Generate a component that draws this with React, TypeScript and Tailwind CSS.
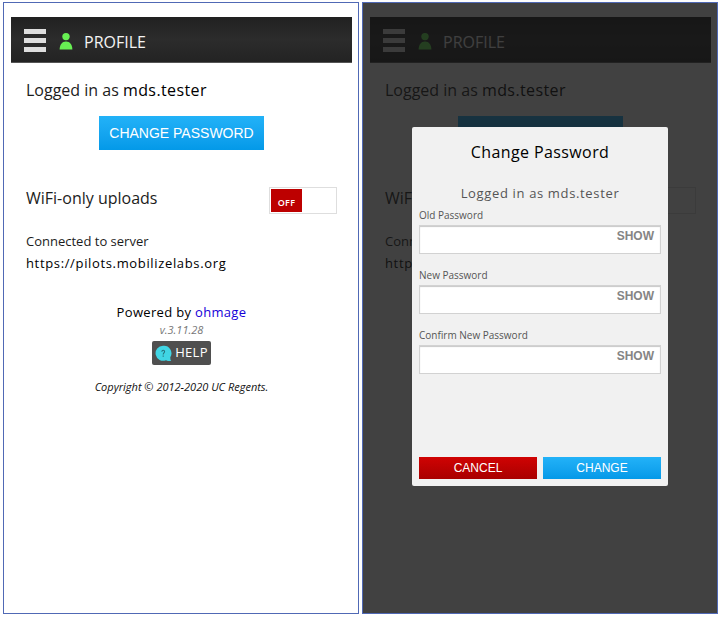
import { useId, useState } from "react";

const blueButton =
  "cursor-pointer bg-linear-to-b from-[#22b2f8] to-[#0399e8] font-['Liberation_Sans',sans-serif] text-white";

function PersonIcon() {
  return (
    <svg width="14" height="18" viewBox="0 0 14 18" aria-hidden="true">
      <circle cx="7" cy="4.6" r="3.7" fill="#68f053" />
      <path d="M0.6 17.4C0.8 12.8 3 9.6 7 9.6s6.2 3.2 6.4 7.8Z" fill="#68f053" />
    </svg>
  );
}

function HelpIcon() {
  return (
    <svg width="17" height="17" viewBox="0 0 17 17" aria-hidden="true">
      <path d="M8 .8a7.5 7.5 0 1 0 3 14.4q1.6 1 5.2.9-1-1.2-.9-3.9A7.5 7.5 0 0 0 8 .8Z" fill="#40d5e4" />
      <path d="M6.8 6.7c.1-1 .6-1.4 1.4-1.4s1.4.5 1.4 1.3c0 1.2-1.4 1.3-1.4 2.8M8.2 10.6v1.1" fill="none" stroke="#26717b" strokeWidth="1.1" />
    </svg>
  );
}

function UploadToggle() {
  const [on, setOn] = useState(false);
  return (
    <label className="flex items-start justify-between text-base leading-[22px] text-[#1c1c1c]">
      <span>WiFi-only uploads</span>
      <input type="checkbox" className="peer sr-only" checked={on} onChange={() => setOn(!on)} />
      <span className="flex h-[27px] w-[68px] border border-[#dedede] bg-white p-px peer-checked:flex-row-reverse">
        <span className="flex w-[31px] items-center justify-center bg-[#bd0000] pt-1 text-[9px] font-semibold tracking-wide text-white">
          {on ? "ON" : "OFF"}
        </span>
      </span>
    </label>
  );
}

function ProfileScreen() {
  return (
    <div className="pt-[14px] pr-1.5 pl-[7px]">
      <header className="flex h-[46px] items-center border-b border-[#555] bg-linear-to-b from-[#212121] via-[#2c2c2c] to-[#232323] pt-0.5 pl-[13px]">
        <button type="button" aria-label="Menu" className="flex w-[22px] cursor-pointer flex-col gap-1">
          <span className="h-[5px] bg-[#dedede]" />
          <span className="h-[5px] bg-[#dedede]" />
          <span className="h-[5px] bg-[#dedede]" />
        </button>
        <span className="ml-[13px]">
          <PersonIcon />
        </span>
        <h1 className="ml-[11px] pt-0.5 text-base leading-5 text-[#f4f4f4]">PROFILE</h1>
      </header>
      <main className="px-[15px] pt-[15px]">
        <p className="text-base leading-6 text-[#1c1c1c]">
          Logged in as <span className="font-medium tracking-wide text-black">mds.tester</span>
        </p>
        <div className="mt-[14px] flex justify-center">
          <button type="button" className={`${blueButton} h-[34px] px-[10px] text-sm`}>
            CHANGE PASSWORD
          </button>
        </div>
        <div className="mt-[37px]">
          <UploadToggle />
        </div>
        <div className="mt-4 text-[13px] leading-[22px] text-[#1c1c1c]">
          <p>Connected to server</p>
          <p className="font-medium tracking-wider text-black">https://pilots.mobilizelabs.org</p>
        </div>
        <footer className="mt-[27px] flex flex-col items-center">
          <p className="text-[13px] leading-[22px] font-medium tracking-wide text-black">
            Powered by{" "}
            <a href="#ohmage" className="text-[#1500d8]">
              ohmage
            </a>
          </p>
          <p className="text-[11px] leading-[14px] text-[#777] italic">v.3.11.28</p>
          <button
            type="button"
            className="mt-1 flex h-6 cursor-pointer items-center gap-[3px] rounded-xs bg-[#4f4f4f] px-[3px] text-[13px] font-medium tracking-wide text-white"
          >
            <HelpIcon />
            HELP
          </button>
          <p className="mt-3 text-[11px] leading-5 text-[#111] italic">Copyright © 2012-2020 UC Regents.</p>
        </footer>
      </main>
    </div>
  );
}

function PasswordField({ label }: { label: string }) {
  const id = useId();
  const [shown, setShown] = useState(false);
  return (
    <div>
      <label htmlFor={id} className="block text-[10px] leading-4 text-[#555]">
        {label}
      </label>
      <div className="mt-0.5 flex h-[29px] items-start border border-[#d2d2d2] bg-white pr-1.5 shadow-[inset_0_1px_1px_#c8c8c8]">
        <input id={id} type={shown ? "text" : "password"} className="h-full min-w-0 flex-1 px-2 text-xs outline-none" />
        <button
          type="button"
          onClick={() => setShown(!shown)}
          className="cursor-pointer pt-px font-['Liberation_Sans',sans-serif] text-xs leading-[18px] font-bold text-[#858585]"
        >
          {shown ? "HIDE" : "SHOW"}
        </button>
      </div>
    </div>
  );
}

function ChangePasswordDialog() {
  return (
    <form
      role="dialog"
      aria-label="Change Password"
      onSubmit={(e) => e.preventDefault()}
      className="w-64 rounded-xs bg-[#f1f1f1] px-[7px] pb-[7px]"
    >
      <h2 className="text-center text-base leading-[50px] font-medium tracking-wide text-black">Change Password</h2>
      <p className="mt-1.5 text-center text-[13px] leading-5 tracking-wider text-[#555]">Logged in as mds.tester</p>
      <div className="mt-1 flex flex-col gap-[13px]">
        <PasswordField label="Old Password" />
        <PasswordField label="New Password" />
        <PasswordField label="Confirm New Password" />
      </div>
      <div className="mt-[83px] grid grid-cols-2 gap-1.5">
        <button
          type="button"
          className="h-[22px] cursor-pointer bg-linear-to-b from-[#d00303] to-[#a90000] font-['Liberation_Sans',sans-serif] text-xs text-white"
        >
          CANCEL
        </button>
        <button type="submit" className={`${blueButton} h-[22px] text-xs`}>
          CHANGE
        </button>
      </div>
    </form>
  );
}

export default function App() {
  return (
    <div className="grid min-h-screen grid-cols-2 gap-[3px] bg-white px-[3px] pt-0.5 pb-1 font-['Open_Sans','Noto_Sans',sans-serif]">
      <section className="border border-[#5069b5]">
        <ProfileScreen />
      </section>
      <section className="relative border border-[#5069b5]">
        <div inert>
          <ProfileScreen />
        </div>
        <div className="absolute inset-0 flex items-center justify-center bg-[#151515]/81 pb-[3px]">
          <ChangePasswordDialog />
        </div>
      </section>
    </div>
  );
}
